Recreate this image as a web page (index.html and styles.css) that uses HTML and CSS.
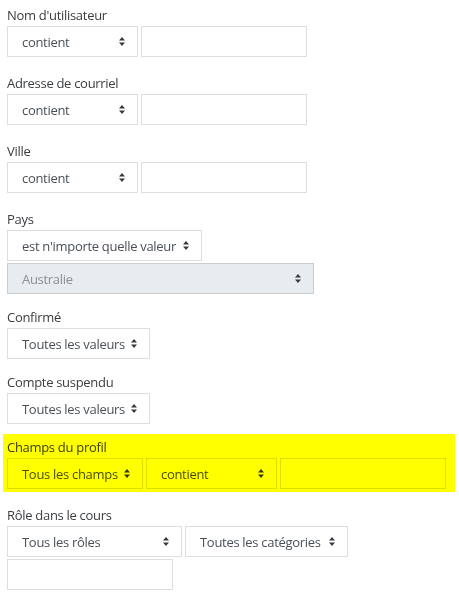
FILE: index.html
```html
<!DOCTYPE html>
<html lang="fr">
<head>
    <meta charset="utf-8" />
    <title>Filtres des utilisateurs</title>
    <link rel="stylesheet" href="styles.css">
</head>
<body>
    <form class="filters">
        <div class="group">
            <div class="group-label">Nom d'utilisateur</div>
            <div class="row">
                <div class="select w-contient"><span>contient</span><svg class="caret" viewBox="0 0 6 9"><path d="M0 3.6 3 0 6 3.6Z M0 5.4 3 9 6 5.4Z"/></svg></div>
                <input class="text" type="text">
            </div>
        </div>
        <div class="group">
            <div class="group-label">Adresse de courriel</div>
            <div class="row">
                <div class="select w-contient"><span>contient</span><svg class="caret" viewBox="0 0 6 9"><path d="M0 3.6 3 0 6 3.6Z M0 5.4 3 9 6 5.4Z"/></svg></div>
                <input class="text" type="text">
            </div>
        </div>
        <div class="group">
            <div class="group-label">Ville</div>
            <div class="row">
                <div class="select w-contient"><span>contient</span><svg class="caret" viewBox="0 0 6 9"><path d="M0 3.6 3 0 6 3.6Z M0 5.4 3 9 6 5.4Z"/></svg></div>
                <input class="text" type="text">
            </div>
        </div>
        <div class="group">
            <div class="group-label">Pays</div>
            <div class="row">
                <div class="select w-any"><span>est n'importe quelle valeur</span><svg class="caret" viewBox="0 0 6 9"><path d="M0 3.6 3 0 6 3.6Z M0 5.4 3 9 6 5.4Z"/></svg></div>
            </div>
            <div class="row">
                <div class="select disabled w-country"><span>Australie</span><svg class="caret" viewBox="0 0 6 9"><path d="M0 3.6 3 0 6 3.6Z M0 5.4 3 9 6 5.4Z"/></svg></div>
            </div>
        </div>
        <div class="group">
            <div class="group-label">Confirmé</div>
            <div class="row">
                <div class="select w-values"><span>Toutes les valeurs</span><svg class="caret" viewBox="0 0 6 9"><path d="M0 3.6 3 0 6 3.6Z M0 5.4 3 9 6 5.4Z"/></svg></div>
            </div>
        </div>
        <div class="group">
            <div class="group-label">Compte suspendu</div>
            <div class="row">
                <div class="select w-values"><span>Toutes les valeurs</span><svg class="caret" viewBox="0 0 6 9"><path d="M0 3.6 3 0 6 3.6Z M0 5.4 3 9 6 5.4Z"/></svg></div>
            </div>
        </div>
        <div class="group highlight">
            <div class="group-label">Champs du profil</div>
            <div class="row">
                <div class="select w-fields"><span>Tous les champs</span><svg class="caret" viewBox="0 0 6 9"><path d="M0 3.6 3 0 6 3.6Z M0 5.4 3 9 6 5.4Z"/></svg></div>
                <div class="select w-contient"><span>contient</span><svg class="caret" viewBox="0 0 6 9"><path d="M0 3.6 3 0 6 3.6Z M0 5.4 3 9 6 5.4Z"/></svg></div>
                <input class="text" type="text">
            </div>
        </div>
        <div class="group">
            <div class="group-label">Rôle dans le cours</div>
            <div class="row">
                <div class="select w-roles"><span>Tous les rôles</span><svg class="caret" viewBox="0 0 6 9"><path d="M0 3.6 3 0 6 3.6Z M0 5.4 3 9 6 5.4Z"/></svg></div>
                <div class="select w-cats"><span>Toutes les catégories</span><svg class="caret" viewBox="0 0 6 9"><path d="M0 3.6 3 0 6 3.6Z M0 5.4 3 9 6 5.4Z"/></svg></div>
            </div>
            <div class="row">
                <input class="text" type="text">
            </div>
        </div>
    </form>
</body>
</html>
```

FILE: styles.css
```css
body {
    margin: 0;
    background: #fff;
    font-family: "Open Sans", "Noto Sans", sans-serif;
    font-size: 13px;
    letter-spacing: -0.3px;
    color: #373a3c;
}
.filters {
    padding: 5px 9px 0 7px;
}
.group {
    margin-bottom: 13px;
}
.group-label {
    line-height: 21px;
    color: #3a3d40;
}
.row {
    display: flex;
    align-items: flex-start;
    gap: 3px;
}
.row + .row {
    margin-top: 2px;
}
.select {
    box-sizing: border-box;
    height: 31px;
    display: flex;
    align-items: center;
    gap: 6px;
    padding: 0 12px 0 14px;
    border: 1px solid rgba(0, 0, 0, 0.13);
    color: #495057;
    white-space: nowrap;
}
.select span {
    flex: 1;
    min-width: 0;
    overflow: hidden;
}
.select.disabled {
    background: #e9ecef;
    color: #8a9096;
}
.caret {
    width: 6px;
    height: 9px;
    flex: none;
    fill: #343a40;
}
.text {
    box-sizing: border-box;
    width: 166px;
    height: 31px;
    margin: 0 0 3px;
    padding: 0 8px;
    border: 1px solid rgba(0, 0, 0, 0.13);
    background: transparent;
    font: inherit;
}
.w-contient { width: 131px; }
.w-any { width: 195px; }
.w-country { width: 307px; }
.w-values { width: 143px; }
.w-fields { width: 136px; }
.w-roles { width: 175px; }
.w-cats { width: 163px; }

.highlight {
    position: relative;
    margin: -3px -5px 13px -4px;
    padding: 3px 5px 0 4px;
}
.highlight::after {
    content: "";
    position: absolute;
    inset: 0;
    background: #ffff00;
    mix-blend-mode: multiply;
    pointer-events: none;
}
```
